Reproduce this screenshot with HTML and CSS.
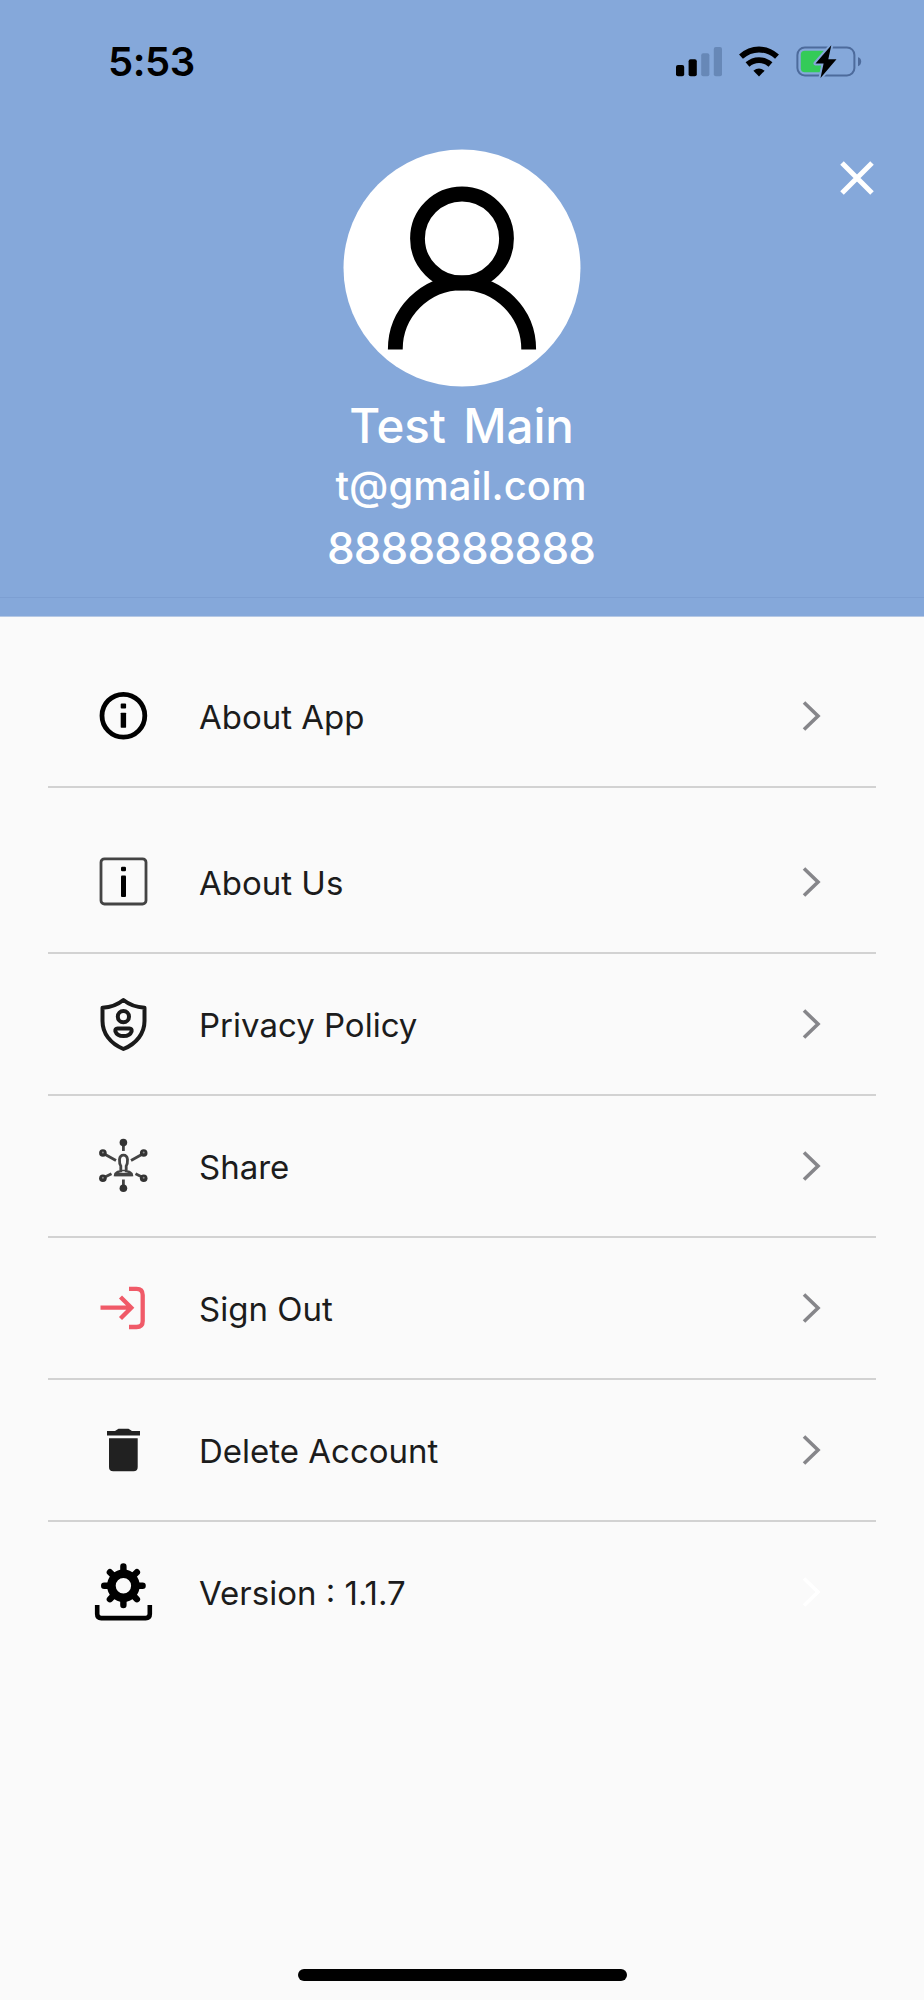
FILE: index.html
```html
<!DOCTYPE html>
<html lang="en">
<head>
<meta charset="utf-8">
<title>Profile</title>
<link rel="stylesheet" href="styles.css">
</head>
<body>
<div class="screen">
  <header class="header">
    <div class="status">
      <span class="time">5:53</span>
      <div class="indicators">
        <svg class="signal" viewBox="0 0 48 40"><rect x="1" y="25" width="8.2" height="11.2" rx="2"/><rect x="13.6" y="19.3" width="8.2" height="16.9" rx="2"/><g fill="#6788b7"><rect x="26.2" y="13.3" width="8.2" height="22.9" rx="2"/><rect x="38.8" y="7" width="8.2" height="29.2" rx="2"/></g></svg>
        <svg class="wifi" viewBox="0 0 42 40"><g fill="none" stroke="#000" stroke-width="5.8"><path d="M3 16.7Q11 9.500 21 9.500T39 16.700"/><path d="M9.500 24.500Q14.500 20.100 21 20.100T32.500 24.500"/></g><path d="M15.400 30.700Q21 26.300 26.600 30.700L21 36.500Z"/></svg>
        <svg class="battery" viewBox="0 0 66 40"><rect x="1.400" y="7.400" width="57" height="28" rx="7.500" fill="none" stroke="#4d6b9c" stroke-width="2"/><path d="M62 17.300Q65.200 18 65.200 21.500T62 26.200Z" fill="#4d6b9c"/><rect x="4.800" y="10.800" width="26" height="21.500" rx="4" fill="#34cb58"/><path d="M35.300 5.200L19.500 23.400H27.600L24.500 38L40.500 19.300H32.300Z" fill="#000" stroke="#85a8da" stroke-width="4" paint-order="stroke" stroke-linejoin="round"/></svg>
      </div>
    </div>
    <div class="profile">
      <svg class="avatar" viewBox="0 0 238 238"><circle cx="119" cy="119" r="118.500" fill="#fff"/><g fill="none" stroke="#000" stroke-width="14.800"><circle cx="119" cy="89.500" r="44.500"/><path d="M52.300 200.500A66.700 66.700 0 0 1 185.700 200.500"/></g></svg>
      <div class="name">Test Main</div>
      <div class="email">t@gmail.com</div>
      <div class="phone">8888888888</div>
      <svg class="close" viewBox="0 0 40 40"><path d="M5 5L35 35M35 5L5 35" fill="none" stroke="#fff" stroke-width="5"/></svg>
    </div>
    <div class="header-foot"></div>
  </header>
  <main class="menu">
    <div class="row first">
      <svg class="icon" viewBox="0 0 60 60"><circle cx="30.400" cy="29.700" r="21.400" fill="none" stroke="#000" stroke-width="4.800"/><rect x="27.700" y="17.500" width="5.400" height="5" rx="1"/><rect x="27.700" y="26.700" width="5.400" height="15" rx=".6"/></svg>
      <span class="label">About App</span>
      <svg class="chev" viewBox="0 0 20 32"><path d="M3 2.500L17 16L3 29.500"/></svg>
    </div>
    <div class="row">
      <svg class="icon" viewBox="0 0 60 60"><rect x="8" y="6.800" width="45" height="45.200" rx="3.500" fill="none" stroke="#444" stroke-width="2.800"/><rect x="28" y="14.800" width="5" height="4.400" rx="1.200"/><rect x="28" y="23.500" width="5" height="21.500" rx="1"/></svg>
      <span class="label">About Us</span>
      <svg class="chev" viewBox="0 0 20 32"><path d="M3 2.500L17 16L3 29.500"/></svg>
    </div>
    <div class="row">
      <svg class="icon" viewBox="0 0 60 60"><g fill="none" stroke="#1a1a1a" stroke-width="4" stroke-linejoin="round"><path d="M30.400 6C25 10.500 18 13.200 9.500 13.800V27C9.500 39 17 49.500 30.400 55C43.800 49.500 51.500 39 51.500 27V13.800C43 13.200 36 10.500 30.400 6Z"/><circle cx="30.400" cy="22.700" r="5.600"/><path d="M24.500 34.500H36.500Q39 34.500 38.600 37.300Q37 42 30.500 42T22.400 37.300Q22 34.500 24.500 34.500Z"/></g></svg>
      <span class="label">Privacy Policy</span>
      <svg class="chev" viewBox="0 0 20 32"><path d="M3 2.500L17 16L3 29.500"/></svg>
    </div>
    <div class="row">
      <svg class="icon" viewBox="0 0 60 60"><g fill="none" stroke="#444" stroke-width="2.800"><path d="M30.400 7V15M10 17.300L23 24.500M51 17.300L38 24.500M10 42L18.500 37.800M51 42L42.500 37.800M30.400 43.500V52"/><path d="M27.800 35V30Q26.300 28 26.500 23.500Q27 19.200 30.500 19.200T34.500 23.500Q34.700 28 33.200 30V35Q38 36 38.600 38.800H22.400Q23 36 27.800 35Z" stroke-width="2.800"/><path d="M28 34.500H33" stroke-width="1.500"/><path d="M21.500 38.500H39.500" stroke-width="3.400"/></g><g fill="#333"><circle cx="30.400" cy="6.600" r="3.800"/><circle cx="9.900" cy="17" r="3.800"/><circle cx="50.700" cy="17" r="3.800"/><circle cx="9.900" cy="42.200" r="3.800"/><circle cx="50.700" cy="42.200" r="3.800"/><circle cx="30.400" cy="52.300" r="3.800"/></g><g fill="#888"><circle cx="9.900" cy="16.500" r="1"/><circle cx="50.700" cy="16.500" r="1"/><circle cx="9.900" cy="41.700" r="1"/><circle cx="50.700" cy="41.700" r="1"/></g></svg>
      <span class="label">Share</span>
      <svg class="chev" viewBox="0 0 20 32"><path d="M3 2.500L17 16L3 29.500"/></svg>
    </div>
    <div class="row">
      <svg class="icon" viewBox="0 0 60 60"><path d="M7.500 29.700H38M27.500 19L38.300 29.700L27.500 40.500M36 10.800H43.500Q49.700 10.800 49.700 17V43Q49.700 49 43.500 49H36" fill="none" stroke="#f05a68" stroke-width="4.300"/></svg>
      <span class="label">Sign Out</span>
      <svg class="chev" viewBox="0 0 20 32"><path d="M3 2.500L17 16L3 29.500"/></svg>
    </div>
    <div class="row">
      <svg class="icon" viewBox="0 0 60 60"><path d="M14 11H22L25.500 8.700H35.500L39 11H47V15.500H14ZM16 18.300H44.700V47Q44.700 51.300 40.500 51.300H20.200Q16 51.300 16 47Z" fill="#212121"/></svg>
      <span class="label">Delete Account</span>
      <svg class="chev" viewBox="0 0 20 32"><path d="M3 2.500L17 16L3 29.500"/></svg>
    </div>
    <div class="row last">
      <svg class="icon" viewBox="0 0 60 60"><g fill="none" stroke="#000"><circle cx="30.400" cy="23.700" r="12" stroke-width="8.600"/><path d="M30.400 4.500V10M30.400 37.400V43M11.200 23.700H16.700M44.100 23.700H49.600M16.900 10.200L21 14.300M39.800 33.100L43.900 37.200M43.900 10.200L39.800 14.300M21 33.100L16.900 37.200" stroke-width="6.400" stroke-linecap="round"/><path d="M4.200 43V52Q4.200 56.100 8.300 56.100H52.700Q56.800 56.100 56.800 52V43" stroke-width="4.600"/></g></svg>
      <span class="label">Version : 1.1.7</span>
      <svg class="chev" viewBox="0 0 20 32"><path d="M3 2.500L17 16L3 29.500"/></svg>
    </div>
  </main>
  <div class="home-indicator"></div>
</div>
</body>
</html>
```
FILE: styles.css
```css
* { box-sizing: border-box; }
body { margin: 0; background: #fafafa; font-family: Inter, "Liberation Sans", sans-serif; }
svg { display: block; flex: none; }
.screen { width: 924px; height: 2000px; display: flex; flex-direction: column; align-items: center; background: #fafafa; }
.header { width: 100%; height: 617px; background: #85a8da; display: flex; flex-direction: column; border-bottom: 1px solid #b5c8e4; }
.status { height: 149px; padding: 40px 62px 0 108px; display: flex; justify-content: space-between; align-items: flex-start; }
.time { font-size: 40px; font-weight: 600; line-height: 44px; letter-spacing: -0.4px; color: #000; }
.indicators { display: flex; }
.signal { width: 48px; height: 40px; }
.wifi { width: 42px; height: 40px; margin-left: 15px; }
.battery { width: 66px; height: 40px; margin-left: 16px; }
.profile { position: relative; flex: 1; display: flex; flex-direction: column; align-items: center; color: #fff; font-weight: 500; white-space: nowrap; }
.avatar { width: 238px; height: 238px; }
.name { font-size: 47.5px; line-height: 62px; margin-top: 8px; word-spacing: 5px; letter-spacing: -0.1px; margin-right: 1px; }
.email { font-size: 40px; line-height: 56px; margin-top: 1px; margin-right: 2px; }
.phone { font-size: 44px; line-height: 60px; margin-top: 4px; margin-right: 2px; letter-spacing: -0.9px; }
.close { position: absolute; top: 9px; right: 47px; width: 40px; height: 40px; }
.header-foot { height: 19px; border-top: 1px solid #7d9fd2; }
.menu { width: 828px; padding-top: 29px; }
.row { height: 142px; display: flex; align-items: center; padding: 0 55px 0 45px; border-bottom: 2px solid #d2d2d2; }
.row.first { margin-bottom: 24px; }
.row.last { border-bottom-color: transparent; }
.icon { width: 60px; height: 60px; }
.label { flex: 1; margin-left: 46px; padding-top: 2px; font-size: 33px; line-height: 40px; font-weight: 400; color: #1c1c1c; white-space: nowrap; }
.chev { width: 20px; height: 32px; }
.chev path { fill: none; stroke: #86868a; stroke-width: 3.6; }
.last .chev path { stroke: #fff; }
.home-indicator { width: 329px; height: 12px; border-radius: 6px; background: #000; margin-top: auto; margin-bottom: 19px; }
```
